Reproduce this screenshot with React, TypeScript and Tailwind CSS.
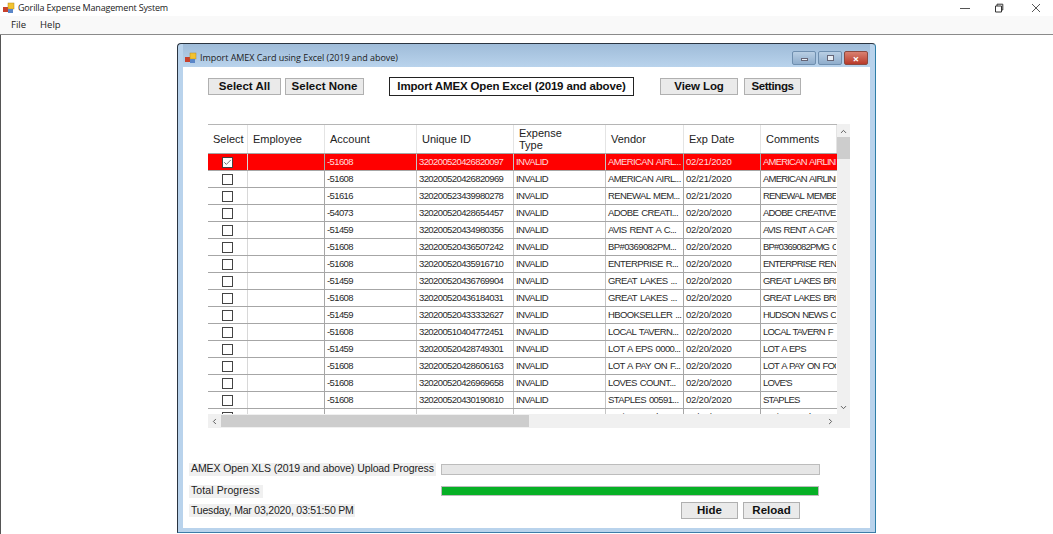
import { Check, ChevronDown, ChevronLeft, ChevronRight, ChevronUp } from "lucide-react";

const columns = [
  { label: "Select", width: "w-[40px]" },
  { label: "Employee", width: "w-[77px]" },
  { label: "Account", width: "w-[92px]" },
  { label: "Unique ID", width: "w-[97px]" },
  { label: "Expense Type", width: "w-[92px]" },
  { label: "Vendor", width: "w-[78px]" },
  { label: "Exp Date", width: "w-[77px]" },
  { label: "Comments", width: "w-[76px]" },
];

const rows = [
  ["-51608", "320200520426820097", "AMERICAN AIRL...", "02/21/2020", "AMERICAN AIRLINES"],
  ["-51608", "320200520426820969", "AMERICAN AIRL...", "02/21/2020", "AMERICAN AIRLINES"],
  ["-51616", "320200523439980278", "RENEWAL MEM...", "02/21/2020", "RENEWAL MEMBERSHIP"],
  ["-54073", "320200520428654457", "ADOBE CREATI...", "02/20/2020", "ADOBE CREATIVE C"],
  ["-51459", "320200520434980356", "AVIS RENT A C...", "02/20/2020", "AVIS RENT A CAR"],
  ["-51608", "320200520436507242", "BP#0369082PM...", "02/20/2020", "BP#0369082PMG C"],
  ["-51608", "320200520435916710", "ENTERPRISE R...", "02/20/2020", "ENTERPRISE RENT"],
  ["-51459", "320200520436769904", "GREAT LAKES ...", "02/20/2020", "GREAT LAKES BREW"],
  ["-51608", "320200520436184031", "GREAT LAKES ...", "02/20/2020", "GREAT LAKES BREW"],
  ["-51459", "320200520433332627", "HBOOKSELLER ...", "02/20/2020", "HUDSON NEWS CO"],
  ["-51608", "320200510404772451", "LOCAL TAVERN...", "02/20/2020", "LOCAL TAVERN F"],
  ["-51459", "320200520428749301", "LOT A EPS 0000...", "02/20/2020", "LOT A EPS"],
  ["-51608", "320200520428606163", "LOT A PAY ON F...", "02/20/2020", "LOT A PAY ON FOOT"],
  ["-51608", "320200520426969658", "LOVES COUNT...", "02/20/2020", "LOVE'S"],
  ["-51608", "320200520430190810", "STAPLES 00591...", "02/20/2020", "STAPLES"],
  ["-51284", "320200520430125385", "Stationery Adv...", "02/20/2020", "Stationery Adv"],
];

function AppIcon() {
  return (
    <svg width="12" height="12" viewBox="0 0 12 12" className="shrink-0">
      <rect x="0" y="5" width="5" height="5" fill="#c8402c" />
      <rect x="5" y="1" width="6" height="6" fill="#f2c230" stroke="#b98a1a" strokeWidth="0.5" />
      <rect x="5" y="7" width="5" height="4" fill="#5a86c8" />
    </svg>
  );
}

function WinButton({ label, className }: { label: string; className: string }) {
  return (
    <button
      className={`h-[17px] flex items-center justify-center border border-[#b0b0b0] bg-[#eaeaea] text-[11.5px] font-bold text-[#111] leading-none ${className}`}
    >
      {label}
    </button>
  );
}

function Row({ row, index }: { row: string[]; index: number }) {
  const selected = index === 0;
  const cell = "h-full shrink-0 flex items-center overflow-hidden whitespace-pre border-r pl-[2px] text-[9.5px] tracking-[-0.6px] [word-spacing:1px]";
  return (
    <div
      className={`flex h-[17px] shrink-0 border-b border-[#a6a6a6] ${selected ? "bg-[#ff0000] text-[#ffdcdc]" : "bg-white text-[#2a2a2a]"}`}
    >
      <div className={`${columns[0].width} h-full shrink-0 flex items-center justify-center border-r border-[#d8d8d8]`}>
        <div className="w-[11px] h-[11px] border border-[#444] bg-white flex items-center justify-center">
          {selected && <Check size={9} strokeWidth={2} className="text-[#444]" />}
        </div>
      </div>
      <div className={`${columns[1].width} h-full shrink-0 border-r border-[#a6a6a6]`} />
      <div className={`${columns[2].width} ${cell} border-[#c4c4c4]`}>{row[0]}</div>
      <div className={`${columns[3].width} ${cell} border-[#c4c4c4]`}>{row[1]}</div>
      <div className={`${columns[4].width} ${cell} border-[#c4c4c4]`}>INVALID</div>
      <div className={`${columns[5].width} ${cell} border-[#a6a6a6]`}>{row[2]}</div>
      <div className={`${columns[6].width} ${cell} border-[#a6a6a6] !tracking-[-0.2px]`}>{row[3]}</div>
      <div className={`${columns[7].width} ${cell} border-transparent !tracking-[-0.8px]`}>{row[4]}</div>
    </div>
  );
}

function DataGrid() {
  return (
    <div className="ml-[25px] mt-[28px] w-[642px] h-[304px] flex flex-col bg-[#f0f0f0]">
      <div className="flex flex-1 min-h-0">
        <div className="w-[629px] flex flex-col overflow-hidden bg-white border-t border-[#b5b5b5]">
          <div className="flex h-[29px] shrink-0 border-b border-[#a6a6a6] text-[11px] leading-[12px] text-[#222]">
            {columns.map((col) => (
              <div
                key={col.label}
                className={`${col.width} h-full shrink-0 flex items-center border-r border-[#e4e4e4] pl-[5px]`}
              >
                {col.label === "Expense Type" ? (
                  <span className="w-[50px]">Expense Type</span>
                ) : (
                  col.label
                )}
              </div>
            ))}
          </div>
          {rows.map((row, i) => (
            <Row key={row[1]} row={row} index={i} />
          ))}
        </div>
        <div className="w-[13px] flex flex-col items-center bg-[#f0f0f0]">
          <ChevronUp size={9} strokeWidth={2.5} className="mt-[3px] text-[#555]" />
          <div className="mt-[1px] w-full h-[22px] bg-[#cdcdcd]" />
          <div className="flex-1" />
          <ChevronDown size={9} strokeWidth={2.5} className="mb-[2px] text-[#555]" />
        </div>
      </div>
      <div className="h-[14px] shrink-0 flex items-center bg-[#f0f0f0]">
        <ChevronLeft size={9} strokeWidth={2.5} className="ml-[2px] text-[#555]" />
        <div className="ml-[2px] w-[308px] h-[12px] bg-[#cdcdcd]" />
        <div className="flex-1" />
        <ChevronRight size={9} strokeWidth={2.5} className="mr-[15px] text-[#555]" />
      </div>
    </div>
  );
}

function ChildWindow() {
  return (
    <div className="ml-[176px] mt-[8px] w-[699px] h-[490px] flex flex-col rounded-t-[4px] border border-[#2a3440] border-b-[#3d7ca8] border-r-[#2f7fa8] bg-[#b9d3ec] px-[5px] pb-[4px]">
      <div className="h-[23px] shrink-0 flex items-center pt-[5px] bg-gradient-to-b from-[#9fbcd9] to-[#b9d3ec]">
        <div className="ml-[2px]">
          <AppIcon />
        </div>
        <span className="ml-[3px] text-[9px] text-[#1c1c1c] tracking-[-0.05px]">
          Import AMEX Card using Excel (2019 and above)
        </span>
        <div className="ml-auto flex gap-[2px] mr-[2px]">
          <div className="w-[24px] h-[14px] rounded-[2px] border border-[#6f8faf] bg-gradient-to-b from-[#b9cfe4] to-[#8fadcc] flex items-center justify-center">
            <div className="w-[7px] h-[3px] mt-[3px] bg-[#e8eef5] border-[0.5px] border-[#667]" />
          </div>
          <div className="w-[24px] h-[14px] rounded-[2px] border border-[#6f8faf] bg-gradient-to-b from-[#b9cfe4] to-[#8fadcc] flex items-center justify-center">
            <div className="w-[7px] h-[6px] bg-[#e8eef5] border border-[#667]" />
          </div>
          <div className="w-[24px] h-[14px] rounded-[2px] border border-[#8a4a40] bg-gradient-to-b from-[#d98070] to-[#b8392a] flex items-center justify-center text-white text-[11px] font-bold leading-none">
            ×
          </div>
        </div>
      </div>
      <div className="flex-1 min-h-0 flex flex-col bg-white font-['Liberation_Sans',sans-serif]">
        <div className="mt-[10px] flex items-center h-[19px]">
          <WinButton label="Select All" className="ml-[25px] w-[73px]" />
          <WinButton label="Select None" className="ml-[4px] w-[79px]" />
          <WinButton
            label="Import AMEX Open Excel (2019 and above)"
            className="ml-[25px] w-[245px] !h-[19px] !bg-white !border-[#222] tracking-[-0.15px]"
          />
          <WinButton label="View Log" className="ml-[26px] w-[78px] tracking-[-0.1px]" />
          <WinButton label="Settings" className="ml-[6px] w-[57px] tracking-[-0.4px]" />
        </div>
        <DataGrid />
        <div className="mt-[34px] flex items-center h-[14px]">
          <span className="ml-[6px] px-[2px] h-[13px] flex items-center bg-[#f0f0f0] text-[10.5px] text-[#222] tracking-[-0.1px] whitespace-nowrap w-[247px]">
            AMEX Open XLS (2019 and above) Upload Progress
          </span>
          <div className="ml-[5px] w-[379px] h-[11px] bg-[#e6e6e6] border border-[#bcbcbc]" />
        </div>
        <div className="mt-[8px] flex items-center h-[14px]">
          <span className="ml-[6px] px-[2px] h-[13px] flex items-center bg-[#f0f0f0] text-[10.5px] text-[#222] tracking-[0.1px] w-[74px] whitespace-nowrap">
            Total Progress
          </span>
          <div className="ml-[178px] w-[378px] h-[10px] bg-[#06b025] border border-[#bcbcbc]" />
        </div>
        <div className="mt-[1px] flex items-start h-[24px]">
          <span className="mt-[5px] ml-[6px] px-[2px] h-[13px] flex items-center bg-[#f0f0f0] text-[10.5px] text-[#222] tracking-[-0.2px] w-[166px] whitespace-nowrap">
            Tuesday, Mar 03,2020, 03:51:50 PM
          </span>
          <div className="ml-[326px] flex gap-[5px] mt-[3px]">
            <WinButton label="Hide" className="w-[57px]" />
            <WinButton label="Reload" className="w-[57px]" />
          </div>
        </div>
      </div>
    </div>
  );
}

export default function App() {
  return (
    <div className="w-[1053px] h-[534px] overflow-hidden bg-white flex flex-col font-['Open_Sans',sans-serif]">
      <div className="h-[16px] shrink-0 flex items-center">
        <div className="ml-[3px]">
          <AppIcon />
        </div>
        <span className="ml-[3px] text-[9px] text-[#222] tracking-[-0.17px]">Gorilla Expense Management System</span>
        <div className="ml-auto flex items-center text-[#333]">
          <svg width="10" height="10" viewBox="0 0 10 10" className="mr-[24px]">
            <path d="M0 5.5h10" stroke="#555" strokeWidth="1" />
          </svg>
          <svg width="10" height="10" viewBox="0 0 10 10" className="mr-[27px]">
            <path d="M1.5 3h6v6h-6zM3 3V1.2h5.8V7H7.5" fill="none" stroke="#333" strokeWidth="1" />
          </svg>
          <svg width="10" height="10" viewBox="0 0 10 10" className="mr-[12px]">
            <path d="M1 1l8 8M9 1l-8 8" stroke="#444" strokeWidth="0.9" />
          </svg>
        </div>
      </div>
      <div className="h-[19px] shrink-0 flex items-center gap-[14px] pl-[11px] bg-[#f9f9f9] border-b border-[#8a8a8a] text-[9.5px] text-[#222]">
        <span>File</span>
        <span>Help</span>
      </div>
      <div className="flex-1 min-h-0 border-l border-[#555]">
        <ChildWindow />
      </div>
    </div>
  );
}
